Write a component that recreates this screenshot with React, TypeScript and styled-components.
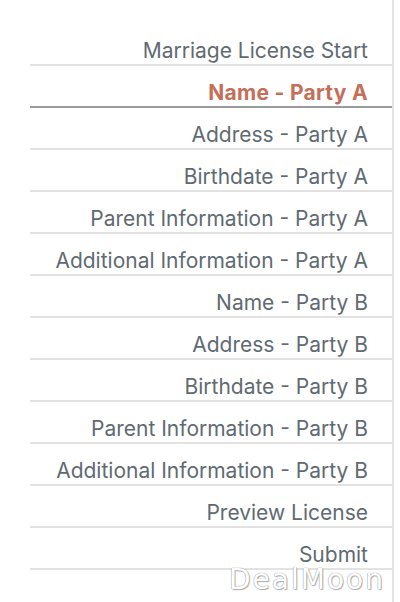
import React from "react";
import styled, { createGlobalStyle } from "styled-components";

const Global = createGlobalStyle`
  html, body { margin: 0; padding: 0; background: #ffffff; }
  body { font-family: Inter, "Helvetica Neue", Arial, sans-serif; }
`;

const Page = styled.div`
  position: relative;
  width: 400px;
  height: 602px;
  overflow: hidden;
  background: #fff;
`;

const Nav = styled.nav`
  width: 394px;
  height: 602px;
  border-right: 2px solid #e3e3e3;
  box-sizing: border-box;
  padding: 24px 0 0 30px;
`;

const List = styled.ul`
  list-style: none;
  margin: 0;
  padding: 0;
  display: flex;
  flex-direction: column;
`;

const Item = styled.li<{ $active?: boolean }>`
  height: 42px;
  box-sizing: border-box;
  display: flex;
  align-items: center;
  justify-content: flex-end;
  padding: 13px 24px 0 0;
  border-bottom: 2px solid ${(p) => (p.$active ? "#9a9a9a" : "#e2e2e2")};
  font-size: 21px;
  letter-spacing: ${(p) => (p.$active ? "0.3px" : "0")};
  font-weight: ${(p) => (p.$active ? 700 : 400)};
  color: ${(p) => (p.$active ? "#c56e58" : "#5f6a72")};
  white-space: nowrap;
`;

const Watermark = styled.div`
  position: absolute;
  left: 229px;
  top: 569px;
  font-family: "DejaVu Sans", sans-serif;
  font-size: 28px;
  line-height: 22px;
  letter-spacing: 2px;
  color: #ffffff;
  text-shadow: 0 0 1px #9c9c9c, 0 0 1px #9c9c9c, 1px 1px 1px #b0b0b0;
`;

const items = [
  "Marriage License Start",
  "Name - Party A",
  "Address - Party A",
  "Birthdate - Party A",
  "Parent Information - Party A",
  "Additional Information - Party A",
  "Name - Party B",
  "Address - Party B",
  "Birthdate - Party B",
  "Parent Information - Party B",
  "Additional Information - Party B",
  "Preview License",
  "Submit",
];

export default function App() {
  return (
    <Page>
      <Global />
      <Nav>
        <List>
          {items.map((t) => (
            <Item key={t} $active={t === "Name - Party A"}>
              {t}
            </Item>
          ))}
        </List>
      </Nav>
      <Watermark>DealMoon</Watermark>
    </Page>
  );
}
